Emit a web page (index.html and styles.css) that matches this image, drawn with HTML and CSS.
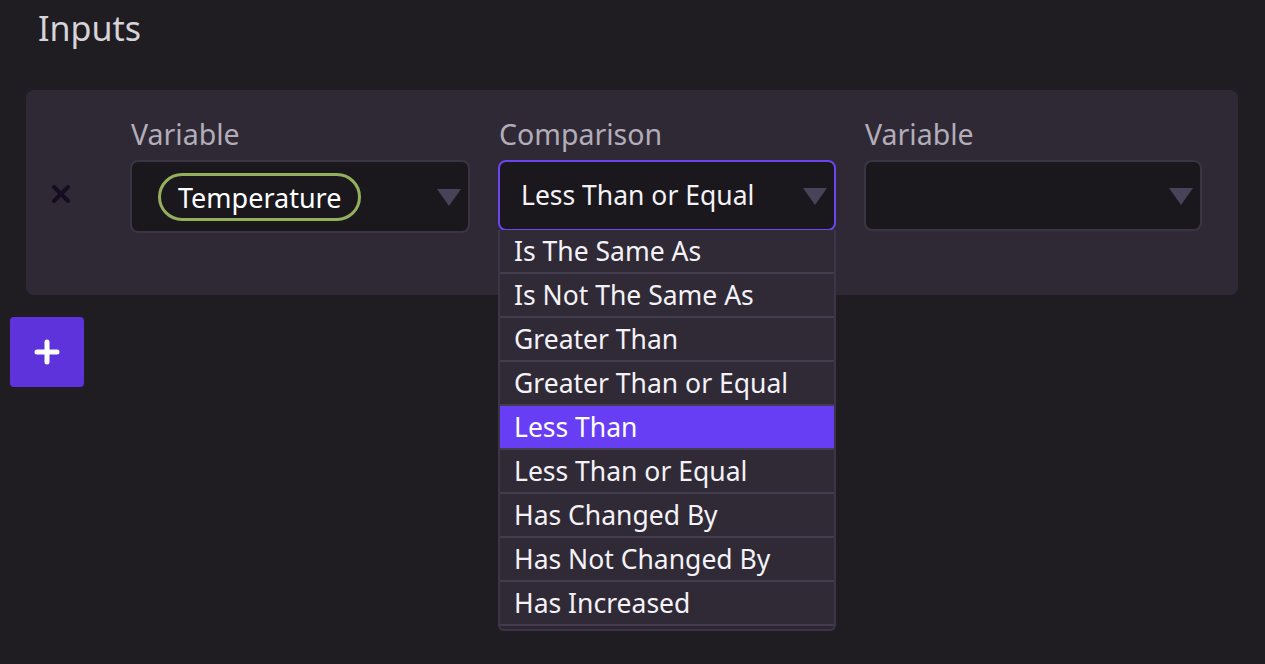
FILE: index.html
```html
<!DOCTYPE html>
<html>
<head>
<meta charset="utf-8">
<link rel="stylesheet" href="styles.css">
</head>
<body>
<main class="page">
  <h2 class="title">Inputs</h2>
  <section class="card">
    <div class="row">
      <button class="remove" aria-label="Remove">
        <svg width="20" height="20" viewBox="0 0 20 20"><path d="M3 3 L17 17 M17 3 L3 17" stroke="#150c1f" stroke-width="4" stroke-linecap="round"/></svg>
      </button>
      <div class="field">
        <label class="label">Variable</label>
        <div class="select select-pill">
          <span class="pill">Temperature</span>
          <span class="arrow"></span>
        </div>
      </div>
      <div class="field">
        <label class="label">Comparison</label>
        <div class="dropdown">
          <div class="select select-open">
            <span class="value">Less Than or Equal</span>
            <span class="arrow"></span>
          </div>
          <ul class="options">
            <li class="option">Is The Same As</li>
            <li class="option">Is Not The Same As</li>
            <li class="option">Greater Than</li>
            <li class="option">Greater Than or Equal</li>
            <li class="option active">Less Than</li>
            <li class="option">Less Than or Equal</li>
            <li class="option">Has Changed By</li>
            <li class="option">Has Not Changed By</li>
            <li class="option">Has Increased</li>
          </ul>
        </div>
      </div>
      <div class="field">
        <label class="label">Variable</label>
        <div class="select">
          <span class="value"></span>
          <span class="arrow"></span>
        </div>
      </div>
    </div>
  </section>
  <button class="add" aria-label="Add">
    <svg width="28" height="28" viewBox="0 0 28 28"><path d="M14 4 V24 M4 14 H24" stroke="#ffffff" stroke-width="5" stroke-linecap="round"/></svg>
  </button>
</main>
</body>
</html>
```

FILE: styles.css
```css
* { box-sizing: border-box; }
html, body {
  margin: 0;
  padding: 0;
  background: #1f1d22;
  height: 100%;
}
body {
  font-family: "Noto Sans", "Open Sans", sans-serif;
  color: #f2f0f4;
}
.page {
  padding: 0 27px 0 10px;
}
.title {
  margin: 0;
  padding: 5px 0 0 28px;
  height: 90px;
  font-size: 34px;
  font-weight: 400;
  line-height: 46px;
  color: #d6d4d9;
}
.card {
  margin-left: 16px;
  background: #2e2935;
  border-radius: 8px;
  height: 205px;
  padding: 24px 36px 0 0;
}
.row {
  display: grid;
  grid-template-columns: 76px 340px 338px 338px;
  column-gap: 28px;
  align-items: start;
}
.remove {
  border: 0;
  background: none;
  margin: 46px 0 0 0;
  width: 76px;
  height: 73px;
  display: flex;
  align-items: center;
  justify-content: center;
  padding: 0 6px 6px 0;
}
.field {
  display: flex;
  flex-direction: column;
}
.label {
  font-size: 28.5px;
  line-height: 40px;
  padding: 0 0 4px 1px;
  margin-bottom: 2px;
  color: #b3adb9;
}
.select {
  position: relative;
  height: 71px;
  background: #1a181d;
  border: 2px solid #3b3444;
  border-radius: 8px;
  display: flex;
  align-items: center;
  padding: 0 40px 0 21px;
  font-size: 26.5px;
}
.select-pill {
  height: 73px;
  padding-left: 26px;
}
.select-open {
  border-color: #6b45f2;
}
.pill {
  display: inline-flex;
  align-items: center;
  height: 48px;
  padding: 0 17px;
  border: 3px solid #94b05c;
  border-radius: 24px;
  color: #ffffff;
  margin-top: 1px;
  font-size: 27px;
}
.value { color: #f4f2f6; padding-bottom: 2px; }
.arrow {
  position: absolute;
  right: 7px;
  top: 50%;
  margin-top: -8px;
  width: 0;
  height: 0;
  border-left: 12px solid transparent;
  border-right: 12px solid transparent;
  border-top: 17px solid #4a4258;
}
.dropdown {
  position: relative;
}
.options {
  position: absolute;
  left: 0;
  right: 0;
  top: 70px;
  margin: 0;
  padding: 0 0 3px;
  list-style: none;
  background: #2b2631;
  border: 2px solid #3d3547;
  border-top: 0;
  border-radius: 0 0 6px 6px;
  z-index: 5;
}
.option {
  height: 44px;
  line-height: 42px;
  padding-left: 14px;
  font-size: 26.5px;
  background: #2f2a36;
  border-bottom: 2px solid #433b4e;
  color: #f4f2f6;
}
.option.active {
  background: #673ef4;
  color: #ffffff;
}
.add {
  margin-top: 22px;
  width: 74px;
  height: 70px;
  border: 0;
  border-radius: 4px;
  background: #5f33dc;
  display: flex;
  align-items: center;
  justify-content: center;
  padding: 0;
}
```
